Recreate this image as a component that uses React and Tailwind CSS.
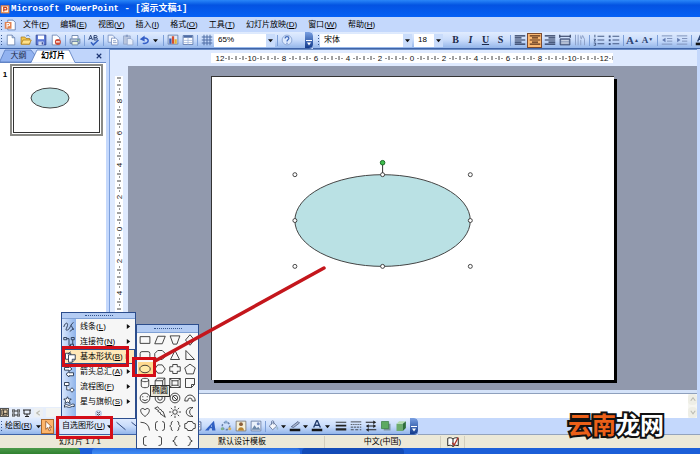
import React from "react";

const FONT = "font-['Liberation_Sans','Noto_Sans_CJK_SC',sans-serif]";

/* ---------- icon drawings, on a 16 x 16 grid ---------- */
const ICONS = {
  file: <><path d="M3 1.5h6.5L13 5v9.5H3z" fill="#fff" stroke="#5a75a8" /><path d="M9.5 1.5V5H13" fill="#cfdcf2" stroke="#5a75a8" /></>,
  open: <><path d="M1.5 13.5V4h5l1.5 2h5v7.500z" fill="#f3c64d" stroke="#a97b1c" /><path d="M1.500 13.500 4 8h11l-2.500 5.500z" fill="#ffe28a" stroke="#a97b1c" /><path d="M8 3c2-2 4-1.500 5 .5" fill="none" stroke="#4470b8" /></>,
  save: <><path d="M1.500 1.500h13v13h-13z" fill="#5b78d6" stroke="#2c3f8c" /><path d="M4 2h8v5H4z" fill="#fff" /><path d="M4.500 10h7v4.500h-7z" fill="#cdd6ee" /><path d="M9 11h1.500v3H9z" fill="#2c3f8c" /></>,
  perm: <><path d="M3 1.500h6L13 5v9.500H3z" fill="#fff" stroke="#5a75a8" /><circle cx="10.500" cy="10.500" r="4" fill="#cf4a35" /><path d="M8 10.500h5" stroke="#fff" strokeWidth="1.500" /></>,
  print: <><path d="M4 6V2h8v4" fill="#fff" stroke="#56719d" /><path d="M1.500 6.500h13v6h-13z" fill="#b7c3d4" stroke="#56719d" /><path d="M4 10h8v4.500H4z" fill="#e9f2de" stroke="#56719d" /><path d="M11 8h2" stroke="#2d9a3e" strokeWidth="1.500" /></>,
  spell: <><path d="M1 8 3.500 1.500 6 8M2 6h3M8 8V2h2.500a1.500 1.500 0 0 1 0 3H8h3a1.500 1.500 0 0 1 0 3z" fill="none" stroke="#2f4675" strokeWidth="1.300" /><path d="m4 11 3 3.500L14 8" fill="none" stroke="#345fc0" strokeWidth="2" /></>,
  copy: <><path d="M1.500 1.500h6L10 4v7H1.500z" fill="#f2f6fd" stroke="#6c86b8" /><path d="M6 5.500h5.500L14.500 8v6.500H6z" fill="#fff" stroke="#6c86b8" /><path d="M8 9h4M8 11.500h5" stroke="#6c86b8" /></>,
  paste: <><path d="M2 2.500h9v11H2z" fill="#b9c6de" stroke="#8b9fc5" /><path d="M5 1h3v3H5z" fill="#8b9fc5" /><path d="M7 6h5l2.500 2.500v6H7z" fill="#e8effb" stroke="#8b9fc5" /></>,
  undo: <><path d="M5 12.500c9 1.500 10-8 1-7" fill="none" stroke="#355fc7" strokeWidth="2" /><path d="M1 7 7.500 2v8z" fill="#355fc7" /></>,
  chart: <><path d="M1.500 13.500v-12h13v12z" fill="#dfe8f6" stroke="#56719d" /><path d="M3 6h3v7H3z" fill="#385bb6" /><path d="M6.500 3h3v10h-3z" fill="#d44e31" /><path d="M10 7h3v6h-3z" fill="#e4b22f" /></>,
  table: <><path d="M1.500 2h13v12h-13z" fill="#fff" stroke="#4d6ba4" /><path d="M2 2h12v3H2z" fill="#4d6ba4" /><path d="M2 8.500h12M2 11.500h12M8 5v9" stroke="#9ab0d8" /></>,
  grid: <path d="M1 4h14M1 8h14M1 12h14M4 1v14M8 1v14M12 1v14" stroke="#4d6ba4" strokeWidth="1.300" />,
  help: <><circle cx="8" cy="8" r="6.500" fill="#dce9fd" stroke="#7b98cb" /><path d="M5.500 6c0-3.500 5-3 5-.3C10.500 8 8 7.500 8 10M8 11.500v1.500" fill="none" stroke="#3d66b8" strokeWidth="1.600" /></>,
  left: <path d="M1 2.500h14M1 5.200h9M1 8h14M1 10.800h9M1 13.500h14" stroke="#243355" strokeWidth="1.500" />,
  center: <path d="M1 2.500h14M4 5.200h8M1 8h14M4 10.800h8M1 13.500h14" stroke="#59311b" strokeWidth="1.500" />,
  right: <path d="M1 2.500h14M6 5.200h9M1 8h14M6 10.800h9M1 13.500h14" stroke="#243355" strokeWidth="1.500" />,
  dist: <><path d="M1 1v4M15 1v4M1 3h14" stroke="#243355" strokeWidth="1.500" /><path d="M1.500 6.500h13v8h-13z" fill="#8496b8" stroke="#243355" /><path d="M3 9h10M3 12h10" stroke="#fff" /></>,
  vert: <path d="M2 1v14M5.500 1v14M9 8v7M9 2v4M14 15V7l-2.500-5-2 5" fill="none" stroke="#8c9fc6" strokeWidth="1.300" />,
  nums: <path d="M2.500 1v3.500M1 7h2.500L1.500 9.500h2M1 12h2.500v3H1M6 3h9M6 8h9M6 13h9" fill="none" stroke="#425782" strokeWidth="1.300" />,
  bullets: <><path d="M6 3h9M6 8h9M6 13h9" stroke="#425782" strokeWidth="1.300" /><path d="M1 2h2.500v2.500H1zM1 7h2.500v2.500H1zM1 12h2.500v2.500H1z" fill="#425782" /></>,
  outdent: <><path d="M1 2.500h14M8 6h7M8 9.500h7M1 13.500h14" stroke="#8093bb" strokeWidth="1.300" /><path d="M6 5v6L1.500 8z" fill="#637bb0" /></>,
  indent: <><path d="M1 2.500h14M8 6h7M8 9.500h7M1 13.500h14" stroke="#8093bb" strokeWidth="1.300" /><path d="M1.500 5v6L6 8z" fill="#637bb0" /></>,
  cursor: <path d="M5 1.500v11l2.600-2.400 2 4.400 1.800-.9-2-4.200H13z" fill="#fff" stroke="#8a4b19" />,
  line: <path d="m2 3 12 10" stroke="#2a4277" strokeWidth="1.300" />,
  arrow: <><path d="m2 3 10 8" stroke="#2a4277" strokeWidth="1.300" /><path d="m14 13-5-1 3-3.500z" fill="#2a4277" /></>,
  rect: <path d="M1.500 3.500h13v9h-13z" fill="#fff" stroke="#2a4277" />,
  oval: <ellipse cx="8" cy="8" rx="6.500" ry="4.500" fill="#fff" stroke="#2a4277" />,
  textbox: <><path d="M1.500 2.500h13v11h-13z" fill="#fff" stroke="#2a4277" /><path d="M4 11 6 5l2 6M9 6h4M9 9h4" fill="none" stroke="#2a4277" /></>,
  wordart: <path d="M0 14 12 1l2 13h-4.500l-.4-3H6.500L5 14zM8 9h1.400L9 6z" fill="#2f5fc2" fillRule="evenodd" />,
  diagram: <><circle cx="8" cy="8" r="5" fill="none" stroke="#6780a8" strokeWidth="2" strokeDasharray="3 2" /><circle cx="8" cy="2.500" r="2" fill="#87a8cf" /><circle cx="3" cy="11.500" r="2" fill="#7fb389" /><circle cx="13" cy="11.500" r="2" fill="#d6b05b" /></>,
  clip: <><path d="M1.500 1.500h13v13h-13z" fill="#f4efd7" stroke="#6d6a63" /><circle cx="8" cy="5.500" r="2.500" fill="#8c5f39" /><path d="M4 14c0-6 8-6 8 0z" fill="#b8832f" /></>,
  image: <><path d="M1.500 1.500h13v13h-13z" fill="#eaf1fb" stroke="#5b6f97" /><path d="m2 13 4-6 3 4 2-2 3 4z" fill="#6b87a9" /><circle cx="11" cy="5" r="2" fill="#7c92c4" /></>,
  fill: <><path d="M3 8 8.500 3l4.500 5-5.500 5z" fill="#f4f7fc" stroke="#56688e" /><path d="M6 6V2.500a1.500 1.500 0 0 1 3 0V6" fill="none" stroke="#56688e" /><path d="M13 8c3 2 2 5 1 5s-2-2-1-5z" fill="#98b7cc" /></>,
  stroke: <><path d="m3 9 9-7 2 2-8 6z" fill="#aab7ce" stroke="#45557c" /><path d="M1 11.500h14V15H1z" fill="#151515" /></>,
  fontcolor: <><path d="m3.500 10 4-9h1l4 9M5 7h6" fill="none" stroke="#27406f" strokeWidth="1.800" /><path d="M1 11.500h14V15H1z" fill="#151515" /></>,
  weights: <><path d="M1 3h14" stroke="#222" strokeWidth="1.200" /><path d="M1 7.500h14" stroke="#222" strokeWidth="2.300" /><path d="M1 12.500h14" stroke="#222" strokeWidth="3" /></>,
  dashes: <><path d="M1 2.500h14" stroke="#222" /><path d="M1 6h14" stroke="#222" strokeDasharray="1.500 1" /><path d="M1 9.500h14" stroke="#222" strokeDasharray="3 1" /><path d="M1 13h14" stroke="#222" strokeDasharray="4 2" /></>,
  arrows: <><path d="M1 3h11M4 8h8M4 13h11" stroke="#222" strokeWidth="1.400" /><path d="m11 .5 4 2.500-4 2.500zM5 5.500 1 8l4 2.500zM11 5.500 15 8l-4 2.500zM5 10.500 1 13l4 2.500z" fill="#222" /></>,
  shadow: <><path d="M5 5h9v9H5z" fill="#7c93a0" /><path d="M2 2h9.500v9.500H2z" fill="#5caa62" stroke="#3d8247" /></>,
  cube: <><path d="M2 5h8.500v9.500H2z" fill="#6dac6c" /><path d="m2 5 3.500-3.500h9L10.500 5z" fill="#b5dcae" /><path d="m10.500 5 4-3.500v9l-4 4z" fill="#2f6e3b" /></>,
  book: <><path d="M8 4C6 2 3 2 1 3v10c2-1 5-1 7 1 2-2 5-2 7-1V3c-2-1-5-1-7 1zv10" fill="#fff" stroke="#222" strokeWidth="1.300" /><path d="m7 9 2.500 3L15 2" fill="none" stroke="#b0352b" strokeWidth="1.800" /></>,
  app: <><path d="M1 2h14v13H1z" fill="#e98a4a" /><path d="M3 4h10v9H3z" fill="#fff3e6" /><path d="M6 12V5.500h3a2 2 0 0 1 0 4H6" fill="none" stroke="#c8401c" strokeWidth="2" /></>,
  doc: <><path d="M5 1.500h7l3 3v10H5z" fill="#fff" stroke="#4d6ba4" /><path d="M1 4h9v9H1z" fill="#e08252" /><path d="M4 11.500V6h2a1.500 1.500 0 0 1 0 3H4" fill="none" stroke="#fff" strokeWidth="1.400" /></>,
  mLines: <path d="M1 8c2-7 6-6 5-2s-4 7 0 6 4-9 8-10M9 14l5-4M11 6l3 6" fill="none" stroke="#27354f" strokeWidth="1.200" />,
  mConn: <path d="M1 2h4v3H1zM11 2h4v3h-4zM10 11h4v3h-4zM5 3.500h3v9h2M13 5v6" fill="none" stroke="#27354f" strokeWidth="1.200" />,
  mBasic: <path d="M6 11H2V3h7v2M9 1 5 4M6 5h9v6l-4 4H6zM11 15v-4h4" fill="#fff" stroke="#27354f" strokeWidth="1.200" />,
  mArrow: <path d="M2 2h6V.5L12 4 8 7V5.500H2zM14 9H8V7.500L4 11l4 3.500V13h6z" fill="#fff" stroke="#27354f" strokeWidth="1.200" />,
  mFlow: <path d="M2 2h6v4H2zM5 6v6h4M12 9l3 3-3 3-3-3z" fill="#fff" stroke="#27354f" strokeWidth="1.200" />,
  mStar: <path d="m6 1 1.500 3L11 4 8.500 6.500 9.500 10 6 8l-3.500 2 1-3.500L1 4l3.500 0zM2 12c4-2 5 2 8 0s3-1 5-1v3c-4-1-5 2-8 1s-3-1-5 0z" fill="#fff" stroke="#27354f" strokeWidth="1.200" />,
};

function Icon({ name, className = "size-3" }) {
  return <svg viewBox="0 0 16 16" className={`shrink-0 ${className}`} aria-hidden="true">{ICONS[name]}</svg>;
}

function Caret({ dir = "down", className = "" }) {
  return (
    <svg viewBox="0 0 6 6" className={`size-[5px] shrink-0 ${className}`} aria-hidden="true">
      <path d={dir === "down" ? "M0 1.500h6L3 5z" : "M1 0v6l4-3z"} fill="#111" />
    </svg>
  );
}

function Tool({ name, label, active }) {
  return (
    <button aria-label={label} className={`flex h-[15px] w-[15px] shrink-0 items-center justify-center ${active ? "border border-[#7b4b32] bg-[#fbb871]" : ""}`}>
      <Icon name={name} />
    </button>
  );
}

const DropTool = ({ name, label }) => (
  <button aria-label={label} className="flex h-[15px] w-[22px] shrink-0 items-center gap-0.5">
    <Icon name={name} /><Caret />
  </button>
);

const Sep = () => <span className="ml-0.5 mr-px h-[11px] w-px shrink-0 bg-[#7c9fd8]" />;

const Grip = () => (
  <span className="mx-px flex shrink-0 flex-col gap-0.5">
    {[0, 1, 2, 3].map((i) => <i key={i} className="size-px bg-[#34548f]" />)}
  </span>
);

const BarEnd = () => (
  <button aria-label="工具栏选项" className="flex h-full w-2 shrink-0 flex-col items-center justify-end rounded-r-sm bg-linear-to-b from-[#7aa0e2] to-[#123a8c] pb-0.5">
    <svg viewBox="0 0 6 6" className="size-[6px]"><path d="M0 .5h6" stroke="#fff" /><path d="M1 2.500h4L3 5.500z" fill="#fff" /></svg>
  </button>
);

function Combo({ label, value, className }) {
  return (
    <div className={`relative flex h-[13px] shrink-0 items-center bg-white ${className}`}>
      <select aria-label={label} className="h-full w-full appearance-none bg-transparent pl-1 text-[8px] leading-3 text-black" defaultValue={value}>
        <option>{value}</option>
      </select>
      <span className="pointer-events-none absolute right-0 flex h-full w-[9px] items-center justify-center bg-[#c9dcfb]"><Caret /></span>
    </div>
  );
}

const MENUS = ["文件|F", "编辑|E", "视图|V", "插入|I", "格式|O", "工具|T", "幻灯片放映|D", "窗口|W", "帮助|H"];

function Keyed({ text }) {
  const [label, key] = text.split("|");
  return <span className="whitespace-nowrap">{label}(<u>{key}</u>)</span>;
}

const BAR = "bg-linear-to-b from-[#e1ecfe] via-[#c9dcfb] to-[#94b6ea]";

function TopBars() {
  return (
    <header className="shrink-0">
      <div className="flex h-[17px] items-center gap-px overflow-hidden bg-linear-to-b from-[#2a86f8] via-[#0453e2] via-30% to-[#0560f5]">
        <Icon name="app" className="size-[10px]" />
        <h1 className="whitespace-nowrap font-['Liberation_Mono','Noto_Sans_CJK_SC',monospace] text-[9px] font-bold leading-3 text-white">Microsoft PowerPoint - [演示文稿1]</h1>
      </div>
      <nav className="flex h-[15px] items-center gap-[11px] bg-[#c4d8fc] text-[8px] leading-3">
        <span className="-mr-2 flex w-5 items-center gap-px"><Grip /><Icon name="doc" /></span>
        {MENUS.map((m) => <button key={m}><Keyed text={m} /></button>)}
      </nav>
      <div className="flex h-[17px] overflow-hidden bg-[#c4d8fc]">
        <div className={`flex w-[313px] shrink-0 items-center overflow-hidden rounded-r-sm border-b border-[#3f64a8] ${BAR}`}>
          <Grip />
          <Tool name="file" label="新建" /><Tool name="open" label="打开" /><Tool name="save" label="保存" /><Tool name="perm" label="权限" />
          <Sep /><Tool name="print" label="打印" /><Sep /><Tool name="spell" label="拼写检查" /><Sep />
          <Tool name="copy" label="复制" /><Tool name="paste" label="粘贴" /><Sep />
          <DropTool name="undo" label="撤消" /><Sep />
          <Tool name="chart" label="插入图表" /><Tool name="table" label="插入表格" /><Sep /><Tool name="grid" label="显示网格" />
          <Combo label="显示比例" value="65%" className="w-[61px]" />
          <Sep /><Tool name="help" label="帮助" />
          <span className="flex-1" /><BarEnd />
        </div>
        <div className={`flex flex-1 items-center overflow-hidden border-b border-[#3f64a8] pl-1 ${BAR}`}>
          <Grip />
          <Combo label="字体" value="宋体" className="w-[92px]" />
          <Combo label="字号" value="18" className="ml-0.5 w-[29px]" />
          <div className="ml-[5px] flex shrink-0 font-['Liberation_Serif',serif] text-[10px] font-bold leading-3 text-[#1c2a4a]">
            <button className="w-[15px]">B</button><button className="w-[15px] italic">I</button>
            <button className="w-[15px] underline">U</button><button className="w-[15px]">S</button>
          </div>
          <Sep />
          <Tool name="left" label="左对齐" /><Tool name="center" label="居中" active /><Tool name="right" label="右对齐" />
          <Tool name="dist" label="分散对齐" /><Tool name="vert" label="文字方向" /><Sep />
          <Tool name="nums" label="编号" /><Tool name="bullets" label="项目符号" /><Sep />
          <button className="w-[15px] shrink-0 font-['Liberation_Serif',serif] text-[11px] font-bold leading-3 text-[#2d4576]">A<sup className="text-[5px]">▲</sup></button>
          <button className="w-[15px] shrink-0 font-['Liberation_Serif',serif] text-[9px] font-bold leading-3 text-[#2d4576]">A<sup className="text-[5px]">▼</sup></button>
          <Sep /><Tool name="outdent" label="减少缩进量" /><Tool name="indent" label="增加缩进量" /><Sep />
          <Tool name="fontcolor" label="字体颜色" />
        </div>
      </div>
    </header>
  );
}

/* ---------- rulers ---------- */
const STEPS = [-6, -5, -4, -3, -2, -1, 0, 1, 2, 3, 4, 5, 6];

function Scale({ middle, steps, across }) {
  return steps.map((n) => {
    const at = middle + n * 32;
    return (
      <g key={n}>
        {[6, 12, 20, 26].map((d) => across
          ? <path key={d} d={`M${at + d} 5v1`} stroke="#333" />
          : <path key={d} d={`M4 ${at + d}h1`} stroke="#333" />)}
        {[9, 16, 23].map((d) => across
          ? <path key={d} d={`M${at + d} 3v4`} stroke="#444" />
          : <path key={d} d={`M2 ${at + d}h4`} stroke="#444" />)}
        {at > 0 && (
          <text
            x={across ? at : 0} y={across ? 8 : 0} textAnchor="middle" fontSize="8" fill="#111"
            transform={across ? undefined : `translate(7 ${at}) rotate(-90)`}
          >{Math.abs(n * 2)}</text>
        )}
      </g>
    );
  });
}

const Dot = ({ x, y }) => <circle cx={x} cy={y} r="2" fill="#fff" stroke="#333" strokeWidth="0.900" />;

function Slide() {
  return (
    <div className="h-[304px] w-[403px] shrink-0 border-l border-t border-[#333] bg-white shadow-[3px_3px_0_0_#000]">
      <svg viewBox="0 0 403 304" className="block h-full w-full">
        <ellipse cx="171" cy="144" rx="88" ry="46" fill="#bae1e4" stroke="#444" />
        <path d="M171 87v11" stroke="#333" />
        <circle cx="171" cy="86" r="2.300" fill="#3fbf4d" stroke="#1c6b27" />
        {[[83, 98], [171, 98], [259, 98], [83, 144], [259, 144], [83, 190], [171, 190], [259, 190]].map(([x, y]) => <Dot key={`${x}-${y}`} x={x} y={y} />)}
      </svg>
    </div>
  );
}

function OutlinePane() {
  return (
    <aside className="flex w-[106px] shrink-0 flex-col bg-white">
      <div className="relative flex h-[14px] shrink-0 items-center bg-[#c0d5fb] text-[8px] leading-3">
        <svg viewBox="0 0 106 14" className="absolute inset-0 h-full w-full" aria-hidden="true">
          <path d="M0 12 5 1h26l4 5-3 7H0z" fill="#91b2f0" stroke="#5578bd" strokeWidth="0.800" />
          <path d="M0 13.500h31L37 1h32l6 12.500h31" fill="#fff" stroke="#5578bd" strokeWidth="0.800" />
        </svg>
        <button className="relative w-[37px] text-center text-[#1c2a4a]">大纲</button>
        <button className="relative w-[32px] text-center font-bold">幻灯片</button>
        <button aria-label="关闭" className="relative ml-auto mr-1">
          <svg viewBox="0 0 8 8" className="size-[6px]"><path d="m1 1 6 6M7 1 1 7" stroke="#1b3473" strokeWidth="1.500" /></svg>
        </button>
      </div>
      <div className="flex flex-1 items-start">
        <span className="w-[10px] pt-1.5 text-center text-[8px] font-bold leading-3">1</span>
        <div className="mt-px h-[72px] w-[93px] border-2 border-[#8a8a86] bg-white p-px">
          <svg viewBox="0 0 85 64" className="h-full w-full border border-[#333]"><ellipse cx="36" cy="30" rx="19" ry="10" fill="#bae1e4" stroke="#444" /></svg>
        </div>
      </div>
      <div className="flex h-[11px] shrink-0 items-center gap-[3px] bg-[#e6eefb]">
        <button aria-label="普通视图" className="flex size-[9px] items-center justify-center border border-[#555] bg-[#f6ddb8]"><svg viewBox="0 0 8 8" className="size-[7px]"><path d="M1 1h6v6H1zM3 1v6M3 5h4" fill="none" stroke="#222" /></svg></button>
        <button aria-label="幻灯片浏览视图"><svg viewBox="0 0 8 8" className="size-2"><path d="M0 1h3v2H0zM5 1h3v2H5zM0 5h3v2H0zM5 5h3v2H5z" fill="none" stroke="#333" /></svg></button>
        <button aria-label="幻灯片放映"><svg viewBox="0 0 8 8" className="size-2"><path d="M0 1h8M1 1v4h6V1M4 5v2M2 7.500h4" fill="none" stroke="#222" /></svg></button>
        <button aria-label="向左滚动" className="flex size-[9px] items-center justify-center bg-[#edf0f3]">
          <svg viewBox="0 0 6 8" className="h-[6px]"><path d="M5 1 1 4l4 3" fill="none" stroke="#bdbdb4" strokeWidth="1.500" /></svg>
        </button>
        <span className="h-[9px] flex-1 bg-[#f3f4f2]" />
      </div>
    </aside>
  );
}

const ScrollBtn = ({ d, label }) => (
  <button aria-label={label} className="flex h-[11px] w-[9px] items-center justify-center rounded-sm bg-[#eeeee6]">
    <svg viewBox="0 0 8 6" className="w-[6px]"><path d={d} fill="none" stroke="#bdbdb4" strokeWidth="1.500" /></svg>
  </button>
);

function Workspace() {
  return (
    <main className="flex min-h-0 flex-1">
      <OutlinePane />
      <div className="w-1 shrink-0 border-r border-[#7da0dc] bg-[#c4d8fc]" />
      <section className="flex min-w-0 flex-1 flex-col border-r-[3px] border-[#c4d8fc] bg-[#dfeafe]">
        <div className="flex h-[17px] shrink-0 items-center justify-center border-t border-[#6d8fc6] pl-4">
          <svg viewBox="0 0 402 10" className="h-[10px] w-[402px] shrink-0 bg-white"><Scale across middle={201} steps={STEPS} /></svg>
        </div>
        <div className="flex min-h-0 flex-1">
          <div className="flex w-[18px] shrink-0 flex-col items-center justify-center">
            <svg viewBox="0 0 8 304" className="h-[304px] w-2 shrink-0 bg-white"><Scale middle={153} steps={[-5, -4, -3, -2, -1, 0, 1, 2, 3, 4]} /></svg>
          </div>
          <div className="flex flex-1 items-center justify-center overflow-hidden bg-[#9199ad]"><Slide /></div>
        </div>
        <div className="h-1 shrink-0 border-b border-[#8ea0bd] bg-[#d5e3f9]" />
        <div className="flex h-6 shrink-0 bg-white">
          <textarea aria-label="备注" className="block flex-1 resize-none bg-white text-[8px]" />
          <div className="flex w-[9px] flex-col justify-between bg-[#f6f6f1]">
            <ScrollBtn d="m1 5 3-4 3 4" label="向上滚动" /><ScrollBtn d="m1 1 3 4 3-4" label="向下滚动" />
          </div>
        </div>
      </section>
    </main>
  );
}

/* ---------- AutoShapes menus ---------- */
const AUTO = [["mLines", "线条|L"], ["mConn", "连接符|N"], ["mBasic", "基本形状|B"], ["mArrow", "箭头总汇|A"], ["mFlow", "流程图|F"], ["mStar", "星与旗帜|S"]];

const Handle = ({ className }) => (
  <div className={`flex shrink-0 items-center justify-center border-b border-[#7fa0d4] bg-[#b4ccf3] ${className}`}>
    <span className="w-[28px] border-t border-dotted border-[#35568f]" />
  </div>
);

function AutoMenu() {
  return (
    <div className="absolute bottom-[35px] left-[61px] w-[75px] border border-[#2c4d8c] bg-[#f6f6f6] text-[8px] leading-3">
      <Handle className="h-[6px]" />
      <ul className="bg-linear-to-r from-[#d9e7fd] to-[#8fb3ea] bg-[length:14px_100%] bg-no-repeat">
        {AUTO.map(([icon, text], i) => (
          <li key={text}>
            <button className={`flex h-[15px] w-full items-center pr-1 ${i === 2 ? "border border-[#2c4d8c] bg-[#ffe8b8]" : ""}`}>
              <span className={`flex justify-center ${i === 2 ? "w-[13px]" : "w-[14px]"}`}><Icon name={icon} /></span>
              <span className="ml-1"><Keyed text={text} /></span>
              <Caret dir="right" className="ml-auto" />
            </button>
          </li>
        ))}
        <li><button aria-label="展开" className="flex h-[9px] w-full items-center justify-center">
          <svg viewBox="0 0 8 8" className="size-[7px]"><circle cx="4" cy="4" r="3.500" fill="#dbe7fa" stroke="#8fa9d4" strokeWidth="0.600" /><path d="m2 2 2 1.500L6 2M2 4.500 4 6l2-1.500" fill="none" stroke="#334" /></svg>
        </button></li>
      </ul>
    </div>
  );
}

const SHAPES = [
  ["矩形", "M1.500 3.500h13v9h-13z"], ["平行四边形", "M5 3h10l-4 10H1z"], ["梯形", "M1.500 2.500h13l-4 11h-5z"], ["菱形", "m8 1 6 7-6 7-6-7z"],
  ["圆角矩形", "M4 3.500h8q2.500 0 2.500 2.500v4q0 2.500-2.500 2.500H4Q1.500 12.500 1.500 10V6Q1.500 3.500 4 3.500z"], ["八边形", "M5 2h6l4 4v4l-4 4H5l-4-4V6z"], ["等腰三角形", "m8 2 6 12H2z"], ["直角三角形", "M2.500 2v12H14z"],
  ["椭圆", "M1 8a7 5 0 1 0 14 0a7 5 0 1 0-14 0"], ["六边形", "M5 2.500h6L15 8l-4 5.500H5L1 8z"], ["十字形", "M5 2h6v3h4v6h-4v3H5v-3H1V5h4z"], ["正五边形", "m8 1.500 7 5-2.500 8h-9L1 6.500z"],
  ["圆柱形", "M3 4v8c0 3 10 3 10 0V4C13 1 3 1 3 4c0 3 10 3 10 0"], ["立方体", "M1.500 5h10v9.500h-10zM1.500 5l3-3.500h10l-3 3.500M14.500 1.500v9.500l-3 3.500"], ["棱台", "M1 2h14v12H1zM4 5h8v6H4zM1 2l3 3M15 2l-3 3M1 14l3-3M15 14l-3-3"], ["折角形", "M2 2h12v8l-4 4H2zM10 14v-4h4"],
  ["笑脸", "M1.500 8a6.500 6.500 0 1 0 13 0a6.500 6.500 0 1 0-13 0M5 5.500v1.500M11 5.500v1.500M4.500 10q3.500 3 7 0"], ["同心圆", "M1.500 8a6.500 6.500 0 1 0 13 0a6.500 6.500 0 1 0-13 0M5 8a3 3 0 1 0 6 0a3 3 0 1 0-6 0"], ["禁止符", "M1.500 8a6.500 6.500 0 1 0 13 0a6.500 6.500 0 1 0-13 0M4.500 8a3.500 3.500 0 1 0 7 0a3.500 3.500 0 1 0-7 0M5 5l6 6"], ["空心弧", "M1 12a7 8 0 0 1 14 0h-4a3 4 0 0 0-6 0z"],
  ["心形", "M8 14C-2 7 3 0 8 5c5-5 10 2 0 9z"], ["闪电形", "m1 3 4-2 3 4 1-.5 2 3 1-.3L15 15 8 10l1-.5L5 7l1-1z"], ["太阳形", "M5 8a3 3 0 1 0 6 0a3 3 0 1 0-6 0M8 0v3M8 13v3M0 8h3M13 8h3M2.500 2.500l2 2M11.500 11.500l2 2M13.500 2.500l-2 2M4.500 11.500l-2 2"], ["新月形", "M12 2C0 1 0 15 12 14 6 11 6 5 12 2z"],
  ["弧形", "M2 3q11 0 12 11"], ["双括号", "M5 2Q2 2 2 5v6q0 3 3 3M11 2q3 0 3 3v6q0 3-3 3"], ["双大括号", "M5 2Q3 2 3 4v2L1 8l2 2v2q0 2 2 2M11 2q2 0 2 2v2l2 2-2 2v2q0 2-2 2"], ["缺角矩形", "M5 2h6q0 3 4 3v6q-4 0-4 3H5q0-3-4-3V5q4 0 4-3z"],
  ["左中括号", "M10 2Q6 2 6 4v8q0 2 4 2"], ["右中括号", "M6 2q4 0 4 2v8q0 2-4 2"], ["左大括号", "M11 2Q8 2 8 4v2L5 8l3 2v2q0 2 3 2"], ["右大括号", "M5 2q3 0 3 2v2l3 2-3 2v2q0 2-3 2"],
];

function ShapePalette() {
  return (
    <div className="absolute bottom-[5px] left-[136px] flex h-[125px] w-[63px] flex-col border border-[#2c4d8c] bg-[#f8f8f8]">
      <Handle className="h-2" />
      <div className="grid flex-1 grid-cols-4 grid-rows-8 px-px">
        {SHAPES.map(([label, d]) => (
          <button key={label} aria-label={label} className={`flex items-center justify-center ${label === "椭圆" ? "bg-[#ffd98f]" : ""}`}>
            <svg viewBox="0 0 16 16" className="size-3"><path d={d} fill={label === "椭圆" ? "#ffe9a8" : "none"} stroke="#222" strokeWidth="1.100" /></svg>
          </button>
        ))}
      </div>
      <div role="tooltip" className="absolute left-[13px] top-[60px] border border-[#333] bg-[#ebe9dc] px-px text-[8px] leading-[10px]">椭圆</div>
    </div>
  );
}

function BottomBars() {
  return (
    <footer className="shrink-0 text-[8px] leading-3">
      <div className="flex h-[17px] bg-[#c4d8fc]">
        <div className={`flex w-[418px] shrink-0 items-center overflow-hidden rounded-r-sm border-b border-[#3f64a8] ${BAR}`}>
          <Grip />
          <button className="ml-0.5 flex w-[36px] shrink-0 items-center gap-1"><Keyed text="绘图|R" /><Caret /></button>
          <button aria-label="选择对象" className="flex h-[15px] w-[13px] shrink-0 items-center justify-center border border-[#a8672c] bg-[#fdb56b]"><Icon name="cursor" /></button>
          <button className="ml-[6px] flex h-[15px] w-[53px] shrink-0 items-center gap-0.5 bg-[#dce8fb] pl-0.5"><Keyed text="自选图形|U" /><Caret /></button>
          <Tool name="line" label="直线" /><Tool name="arrow" label="箭头" /><Tool name="rect" label="矩形" /><Tool name="oval" label="椭圆" />
          <Tool name="textbox" label="文本框" /><Tool name="textbox" label="竖排文本框" />
          <Tool name="wordart" label="艺术字" /><Tool name="diagram" label="图示" /><Tool name="clip" label="剪贴画" /><Tool name="image" label="图片" />
          <Sep /><DropTool name="fill" label="填充颜色" /><DropTool name="stroke" label="线条颜色" /><DropTool name="fontcolor" label="字体颜色" />
          <Tool name="weights" label="线型" /><Tool name="dashes" label="虚线线型" /><Tool name="arrows" label="箭头样式" />
          <Tool name="shadow" label="阴影样式" /><Tool name="cube" label="三维效果样式" />
          <span className="flex-1" /><BarEnd />
        </div>
        <div className="flex-1 border-b border-[#93a3bd]" />
      </div>
      <div className="flex h-[13px] items-center bg-[#ece9d8] text-center">
        <span className="w-[160px] shrink-0">幻灯片 1 / 1</span>
        <span className="w-[165px] shrink-0 border-r border-[#d2cebd]">默认设计模板</span>
        <span className="w-[116px] shrink-0 border-r border-[#d2cebd]">中文(中国)</span>
        <span className="flex w-[24px] shrink-0 justify-center border-r border-[#d2cebd]"><Icon name="book" /></span>
      </div>
      <div className="flex h-[6px] bg-[#1c5fd8]">
        <span className="w-[80px] rounded-tr bg-linear-to-b from-[#4d9a4b] to-[#2f8130]" />
        <span className="ml-3 w-[208px] rounded-t-sm bg-linear-to-b from-[#2c6fe0] to-[#3f8cf5]" />
        <span className="ml-0.5 w-[102px] rounded-t-sm bg-[#124bb8]" />
      </div>
    </footer>
  );
}

function Annotations() {
  return (
    <svg viewBox="0 0 340 194" className="pointer-events-none absolute bottom-0 left-0 h-[194px] w-[340px]" aria-hidden="true">
      <g fill="none" stroke="#d40d17" strokeWidth="3">
        <path d="M63.500 87.500h64v18h-64z" />
        <path d="M133.500 98.500h21v17h-21z" />
        <path d="M57.500 157.500h54v20h-54z" />
        <path d="M155 101 324 8" stroke="#c4161c" strokeWidth="3.500" strokeLinecap="round" />
      </g>
    </svg>
  );
}

export default function App() {
  return (
    <div className={`relative flex h-screen min-h-[454px] flex-col overflow-hidden bg-[#c4d8fc] text-black ${FONT}`}>
      <TopBars />
      <Workspace />
      <BottomBars />
      <AutoMenu />
      <ShapePalette />
      <Annotations />
      <div className="absolute bottom-4 right-[36px] whitespace-nowrap font-['Noto_Sans_CJK_SC',sans-serif] text-[24px] font-bold leading-7 text-white [-webkit-text-stroke:4px_#111] [paint-order:stroke_fill]">
        <span className="text-[#ec6018]">云南</span>龙网
      </div>
    </div>
  );
}
